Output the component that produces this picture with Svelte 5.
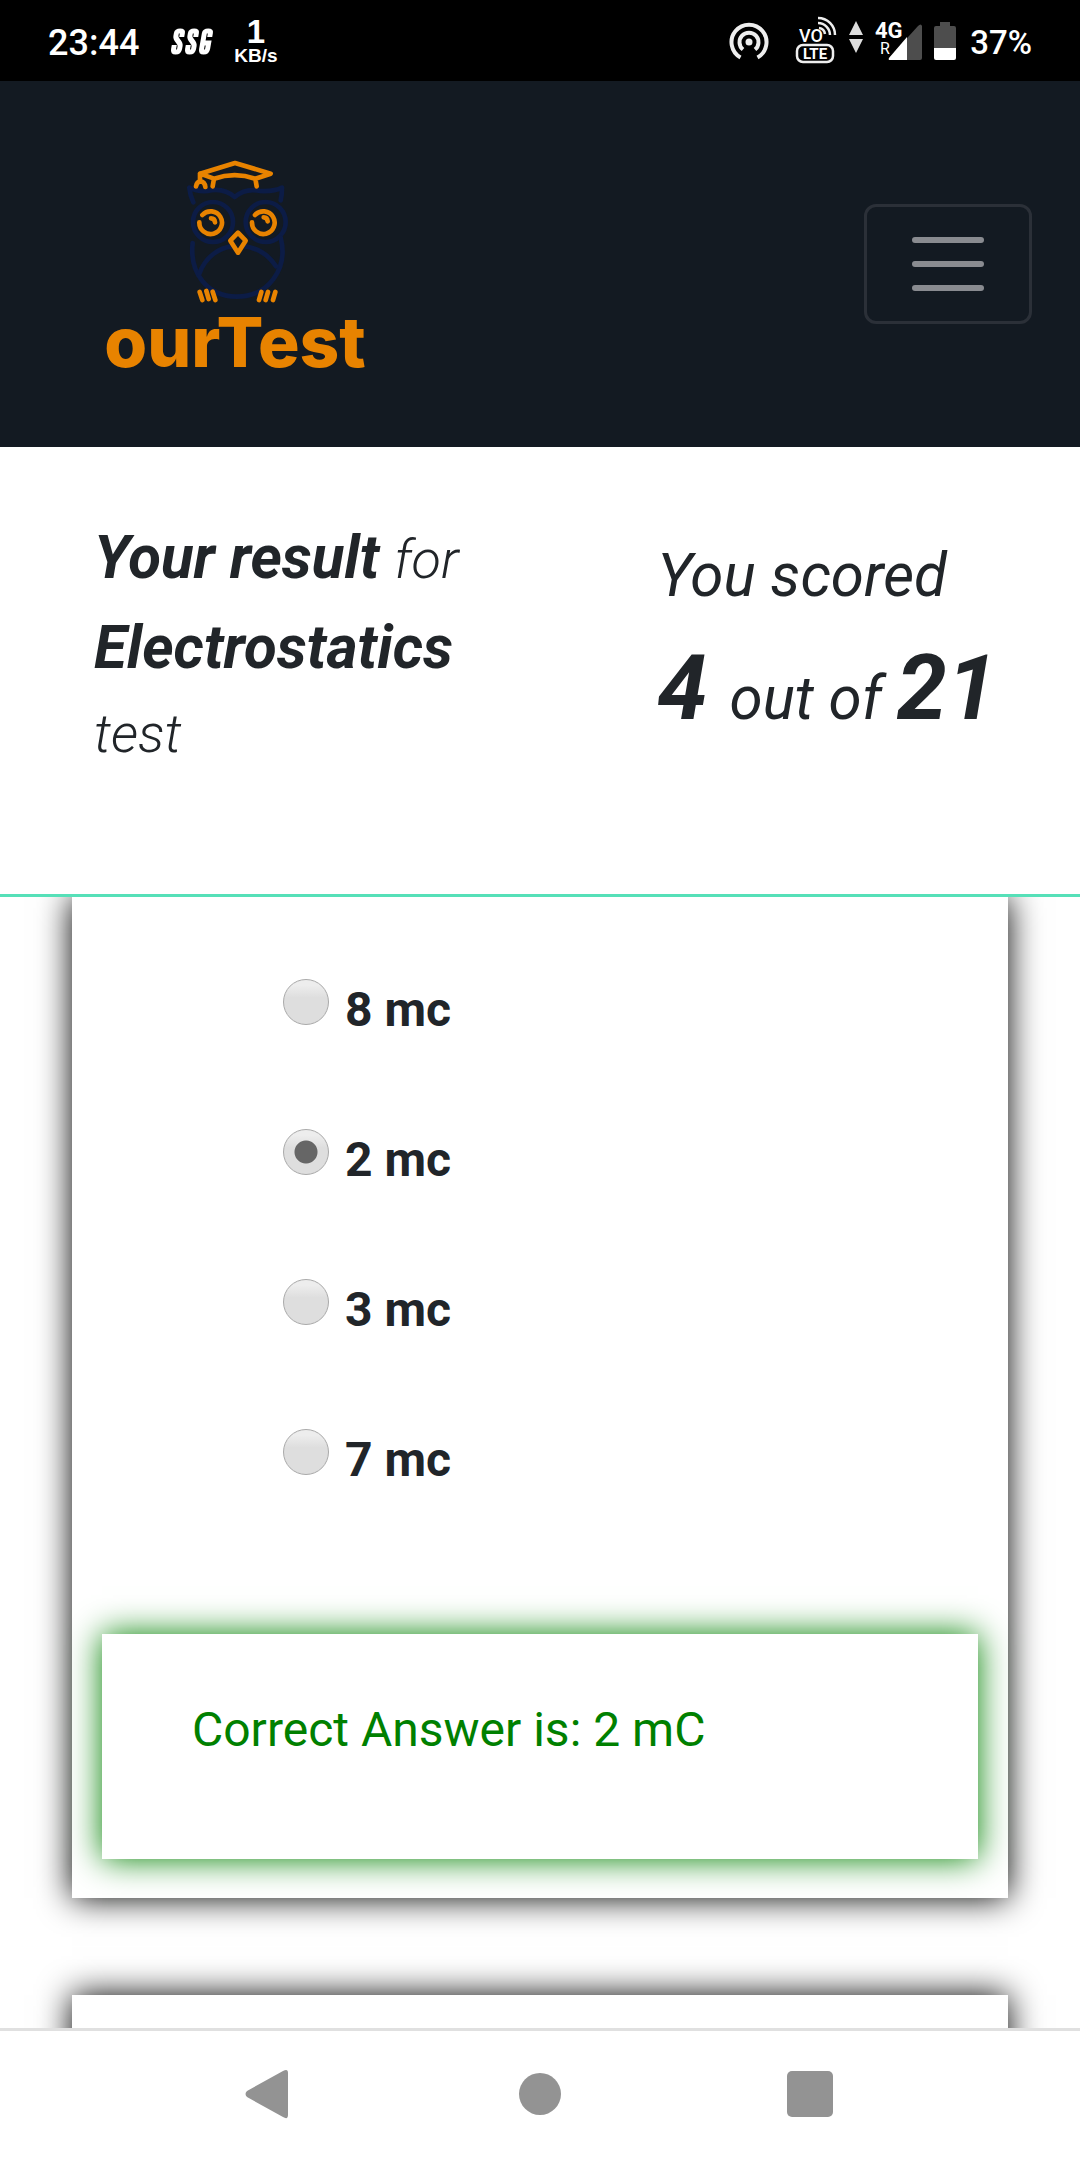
<script>
  const options = ['8 mc', '2 mc', '3 mc', '7 mc'];
  let selected = $state('2 mc');
</script>

<div class="screen">
  <div class="status">
    <div class="status-left">
      <span class="time">23:44</span>
      <svg class="ssg" width="44" height="34" viewBox="0 0 44 34" fill="none" stroke="#fff" stroke-width="5" aria-label="SSG">
        <g transform="skewX(-10)">
          <path d="M14 13V9q0-2-3-2t-3 2v3q0 2 3 5t3 5v3q0 3-3 3t-3-3v-4" />
          <path d="M28 13V9q0-2-3-2t-3 2v3q0 2 3 5t3 5v3q0 3-3 3t-3-3v-4" />
          <path d="M42 13V9q0-2-3-2t-3 2v16q0 3 3 3t3-3v-6h-4" />
        </g>
      </svg>
      <span class="speed"><b>1</b><small>KB/s</small></span>
    </div>
    <div class="status-right">
      <svg class="cast" width="40" height="38" viewBox="0 0 40 38" fill="none" stroke="#eee" stroke-width="4">
        <path d="M11.500 35.500A17.500 17.500 0 1 1 28.500 35.500" />
        <path d="M14 27.500A9.500 9.500 0 1 1 26 27.500" />
        <circle cx="20" cy="20" r="3.500" fill="#eee" stroke="none" />
      </svg>
      <svg class="volte" width="42" height="48" viewBox="0 0 42 48" fill="none" stroke="#eee">
        <text x="4" y="26" class="vo">VO</text>
        <path d="M23 2A17 17 0 0 1 40 19M23 7A12 12 0 0 1 35 19M24 12A7 7 0 0 1 30 18" stroke-width="2.500" />
        <rect x="2" y="29" width="36" height="17" rx="6" stroke-width="2.500" />
        <text x="20" y="43" text-anchor="middle" class="lte">LTE</text>
      </svg>
      <svg class="arrows" width="14" height="32" viewBox="0 0 14 32" fill="#ddd">
        <path d="M7 0L14 14H0zM7 32L14 18H0z" />
      </svg>
      <svg class="signal" width="48" height="44" viewBox="0 0 48 44">
        <path d="M47 7V39q0 2-2 2H15q-2 0-1-2L43 7q3-3 4 0z" fill="#4d4d4d" />
        <path d="M32 18V41H15q-2 0-1-2z" fill="#fff" />
        <text x="0" y="19" class="net">4G</text>
        <text x="5" y="35" class="roam">R</text>
      </svg>
      <svg class="battery" width="22" height="38" viewBox="0 0 22 38">
        <path d="M6 0h10v4h4q2 0 2 2v20H0V6q0-2 2-2h4z" fill="#4d4d4d" />
        <path d="M0 26h22v10q0 2-2 2H2q-2 0-2-2z" fill="#fff" />
      </svg>
      <span class="percent">37%</span>
    </div>
  </div>

  <header class="navbar">
    <a class="brand" href="/" aria-label="ourTest">
      <svg width="320" height="250" viewBox="0 0 960 750" fill="none" stroke-width="14" stroke-linecap="round" stroke-linejoin="round">
        <g stroke="#0c1c46">
          <path d="M340 190Q330 168 328 146Q350 158 382 156Q430 144 464 174Q498 146 540 156Q584 158 606 146Q606 168 602 184" />
          <circle cx="399" cy="249" r="60" />
          <circle cx="557" cy="249" r="60" />
          <path d="M338 312C328 400 380 472 470 473C565 472 626 390 602 296" />
          <path d="M358 404C378 350 420 326 456 322M496 322C544 330 570 354 588 382" />
        </g>
        <g stroke="#e88300">
          <path d="M360 104L465 72L572 104L526 119Q464 98 402 119L360 104V122M402 119L398 142M526 119L530 142M348 142Q350 128 362 127Q374 128 376 144" />
          <path d="M367 228A34 34 0 1 1 358 250M525 228A34 34 0 1 1 516 250" />
          <path d="M393 238Q404 238 405 250M551 235Q562 235 563 247" />
          <path d="M474 281L497 305L474 341L451 305Z" />
          <path d="M359 459L367 483M379 456L386 480M398 458L406 483M544 459L537 483M564 459L557 483M586 459L579 483" />
        </g>
        <text x="465" y="684" text-anchor="middle" class="wordmark">ourTest</text>
      </svg>
    </a>
    <button class="toggler" aria-label="Toggle navigation">
      <span></span><span></span><span></span>
    </button>
  </header>

  <section class="result">
    <p class="title"><strong>Your result{' '}</strong>for <strong>Electrostatics</strong> test</p>
    <p class="score">You scored<br /><strong>4{' '}</strong>out of <strong>21</strong></p>
  </section>

  <main>
    <article class="card first">
      <div class="options" role="radiogroup" aria-label="Answers">
        {#each options as option}
          <label>
            <input type="radio" name="answer" value={option} bind:group={selected} />
            <span>{option}</span>
          </label>
        {/each}
      </div>
      <div class="answer">Correct Answer is: 2 mC</div>
    </article>
    <article class="card next"></article>
  </main>

  <nav class="system">
    <button aria-label="Back">
      <svg width="50" height="50" viewBox="0 0 50 50"><path d="M2 22L38 2Q43 -1 43 4V46Q43 51 38 48L2 28Q-1 25 2 22z" /></svg>
    </button>
    <button aria-label="Home">
      <svg width="50" height="50" viewBox="0 0 50 50"><circle cx="25" cy="25" r="21" /></svg>
    </button>
    <button aria-label="Recent apps">
      <svg width="50" height="50" viewBox="0 0 50 50"><rect x="2" y="2" width="46" height="46" rx="5" /></svg>
    </button>
  </nav>
</div>

<style>
  :global(body) {
    background: #fff;
  }
  .screen {
    display: flex;
    flex-direction: column;
    height: 100vh;
    overflow: hidden;
    font-family: Roboto, "Liberation Sans", sans-serif;
    font-size: 48px;
    line-height: 1.5;
    color: #212529;
  }
  .status {
    display: flex;
    flex-shrink: 0;
    justify-content: space-between;
    box-sizing: border-box;
    height: 81px;
    padding: 0 48px;
    background: #000;
    color: #fff;
    line-height: 1;
  }
  .status-left,
  .status-right {
    display: flex;
    align-items: center;
  }
  .time {
    font-size: 36px;
    font-weight: 500;
    padding-top: 4px;
  }
  .ssg {
    margin-left: 31px;
  }
  .speed {
    display: flex;
    flex-direction: column;
    align-items: center;
    margin-left: 20px;
    padding-top: 3px;
    font-family: "Liberation Sans", sans-serif;
    font-weight: 700;
  }
  .speed b {
    font-size: 33px;
    line-height: 28px;
  }
  .speed small {
    font-size: 19px;
    line-height: 20px;
  }
  .arrows {
    margin: 0 12px 8px;
  }
  .volte {
    margin-left: 26px;
    margin-bottom: 2px;
  }
  .signal {
    overflow: visible;
  }
  .battery {
    margin-left: 11px;
  }
  .percent {
    margin-left: 14px;
    font-size: 33px;
    font-weight: 500;
    padding-top: 3px;
  }
  svg text {
    stroke: none;
    fill: #fff;
  }
  .vo {
    font-size: 18px;
    font-weight: 500;
  }
  .lte {
    font-size: 15px;
    font-weight: 700;
  }
  .net {
    font-size: 22px;
    font-weight: 700;
  }
  .roam {
    font-size: 16px;
  }
  .navbar {
    display: flex;
    flex-shrink: 0;
    align-items: center;
    justify-content: space-between;
    box-sizing: border-box;
    height: 366px;
    padding: 0 48px 0 80px;
    background: #131a22;
  }
  .brand svg {
    display: block;
  }
  .brand .wordmark {
    font-family: Inter, sans-serif;
    font-size: 208px;
    font-weight: 800;
    fill: #e88300;
  }
  .toggler {
    display: flex;
    flex-direction: column;
    align-items: center;
    justify-content: center;
    gap: 18px;
    width: 168px;
    height: 120px;
    padding: 0;
    border: 3px solid #2b3038;
    border-radius: 12px;
    background: none;
  }
  .toggler span {
    width: 72px;
    height: 6px;
    border-radius: 3px;
    background: #898b90;
  }
  .result {
    display: flex;
    flex-shrink: 0;
    justify-content: space-between;
    box-sizing: border-box;
    height: 450px;
    padding: 66px 83px 0 94px;
    border-bottom: 3px solid #56e0b8;
    font-style: italic;
  }
  .result p {
    margin: 0;
  }
  .title {
    width: 400px;
    font-size: 54px;
    font-weight: 300;
  }
  .title strong {
    font-size: 60px;
    font-weight: 700;
  }
  .score {
    padding-top: 18px;
    font-size: 60px;
    white-space: nowrap;
  }
  .score strong {
    font-size: 90px;
    font-weight: 700;
  }
  main {
    flex: 1;
    min-height: 0;
    overflow: hidden;
    padding: 0 72px;
  }
  .card {
    background: #fff;
    box-shadow: 0 0 32px #000;
  }
  .first {
    padding: 77px 30px 39px;
  }
  .next {
    height: 300px;
    margin-top: 97px;
  }
  .options {
    display: flex;
    flex-direction: column;
    align-items: flex-start;
    gap: 78px;
    padding-left: 181px;
  }
  label {
    display: flex;
    align-items: flex-start;
    gap: 16px;
    font-weight: 700;
  }
  input {
    appearance: none;
    box-sizing: border-box;
    width: 46px;
    height: 46px;
    margin: 5px 0 0;
    border: 1px solid #a9a9a9;
    border-radius: 50%;
    background: linear-gradient(#ededed 0%, #ededed 12%, #dedede 40%, #dedede 100%);
  }
  input:checked {
    background:
      radial-gradient(circle, #666 0 11px, transparent 12px),
      linear-gradient(#ededed 0%, #ededed 12%, #dedede 40%, #dedede 100%);
  }
  .answer {
    margin-top: 138px;
    padding: 60px 90px 93px;
    color: #008000;
    background: #fff;
    box-shadow: 0 0 32px #008000;
  }
  .system {
    display: flex;
    flex-shrink: 0;
    box-sizing: border-box;
    height: 132px;
    padding: 0 135px 3px;
    border-top: 3px solid #e0e0e0;
    background: #fff;
  }
  .system button {
    display: flex;
    flex: 1;
    align-items: center;
    justify-content: center;
    padding: 0;
    border: 0;
    background: none;
  }
  .system svg {
    fill: #939393;
  }
</style>
